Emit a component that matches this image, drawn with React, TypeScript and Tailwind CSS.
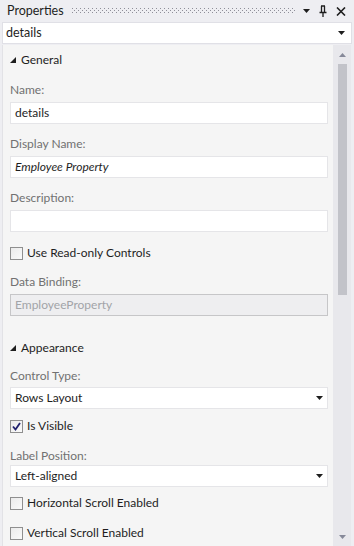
import React from "react";

function DownTri({ color = "#1e1e1e" }: { color?: string }) {
  return (
    <svg width="7" height="4" viewBox="0 0 7 4">
      <polygon points="0,0 7,0 3.5,4" fill={color} />
    </svg>
  );
}

function Header({ title }: { title: string }) {
  return (
    <div className="flex items-center h-[16px]">
      <svg width="6" height="6" viewBox="0 0 6 6">
        <polygon points="6,0 6,6 0,6" fill="#1e1e1e" />
      </svg>
      <span className="ml-[5px] text-[#1e1e1e]">{title}</span>
    </div>
  );
}

function Label({ text }: { text: string }) {
  return <div className="h-[16px] leading-[16px] text-[#717171]">{text}</div>;
}

function TextBox({ value, italic }: { value?: string; italic?: boolean }) {
  return (
    <div
      className={
        "h-[22px] bg-white border border-[#e5e5e8] flex items-center pl-[4px] text-[#1e1e1e] " +
        (italic ? "italic" : "")
      }
    >
      {value}
    </div>
  );
}

function Select({ value }: { value: string }) {
  return (
    <div className="h-[22px] bg-white border border-[#e5e5e8] flex items-center pl-[4px] pr-[4px] text-[#1e1e1e]">
      <span className="flex-1">{value}</span>
      <DownTri />
    </div>
  );
}

function Check({ label, checked }: { label: string; checked?: boolean }) {
  return (
    <div className="flex items-center h-[16px]">
      <div className="w-[13px] h-[13px] border border-[#8f8f8f] bg-gradient-to-br from-[#ebebeb] to-[#fafafa] flex items-center justify-center">
        {checked && (
          <svg width="9" height="9" viewBox="0 0 9 9">
            <path d="M1 4.5 L3.5 7.5 L8 1" stroke="#21216e" strokeWidth="1.8" fill="none" />
          </svg>
        )}
      </div>
      <span className="ml-[4px] text-[#1e1e1e]">{label}</span>
    </div>
  );
}

export default function App() {
  return (
    <div className="w-[354px] h-[546px] bg-[#eeeef2] flex flex-col overflow-hidden font-['Lato','Noto_Sans',sans-serif] text-[12px]">
      {/* title bar */}
      <div className="h-[22px] flex items-center shrink-0">
        <span className="ml-[7px] text-[#1e1e1e] text-[12.5px]">Properties</span>
        <svg className="ml-[8px] flex-1 h-[6px]" height="6">
          <defs>
            <pattern id="grip" width="4" height="4" patternUnits="userSpaceOnUse">
              <rect x="0" y="0" width="1" height="1" fill="#8f8f99" />
              <rect x="2" y="2" width="1" height="1" fill="#8f8f99" />
            </pattern>
          </defs>
          <rect width="100%" height="6" fill="url(#grip)" />
        </svg>
        <div className="ml-[8px] flex items-center gap-[9px] mr-[8px]">
          <DownTri />
          <svg width="8" height="12" viewBox="0 0 8 12">
            <path d="M2 1 H6 M2.5 1 V7 M5.5 1 V7 M0.5 7.5 H7.5 M4 7.5 V12" stroke="#1e1e1e" strokeWidth="1.3" fill="none" />
          </svg>
          <svg width="10" height="9" viewBox="0 0 10 9">
            <path d="M1 0.5 L9 8.5 M9 0.5 L1 8.5" stroke="#1e1e1e" strokeWidth="1.6" fill="none" />
          </svg>
        </div>
      </div>
      {/* object selector */}
      <div className="mx-[2px] h-[22px] shrink-0 bg-white border border-[#e0e0e6] flex items-center pl-[3px] pr-[6px] text-[#1e1e1e] text-[12.5px]">
        <span className="flex-1">details</span>
        <DownTri />
      </div>
      {/* content */}
      <div className="flex-1 flex ml-[2px] mr-[3px] mt-[1px] bg-[#f5f5f5] border-l border-[#e2e2e6]">
        <div className="flex-1 pl-[7px] pr-[5px] pt-[7px] flex flex-col">
          <Header title="General" />
          <div className="mt-[14px]"><Label text="Name:" /></div>
          <div className="mt-[4px]"><TextBox value="details" /></div>
          <div className="mt-[12px]"><Label text="Display Name:" /></div>
          <div className="mt-[4px]"><TextBox value="Employee Property" italic /></div>
          <div className="mt-[12px]"><Label text="Description:" /></div>
          <div className="mt-[4px]"><TextBox /></div>
          <div className="mt-[13px]"><Check label="Use Read-only Controls" /></div>
          <div className="mt-[13px]"><Label text="Data Binding:" /></div>
          <div className="mt-[4px] h-[22px] bg-[#eeeef0] border border-[#c6c6c8] flex items-center pl-[4px] text-[#a2a4a8]">
            EmployeeProperty
          </div>
          <div className="mt-[24px]"><Header title="Appearance" /></div>
          <div className="mt-[12px]"><Label text="Control Type:" /></div>
          <div className="mt-[3px]"><Select value="Rows Layout" /></div>
          <div className="mt-[9px]"><Check label="Is Visible" checked /></div>
          <div className="mt-[14px]"><Label text="Label Position:" /></div>
          <div className="mt-[1px]"><Select value="Left-aligned" /></div>
          <div className="mt-[8px]"><Check label="Horizontal Scroll Enabled" /></div>
          <div className="mt-[14px]"><Check label="Vertical Scroll Enabled" /></div>
        </div>
        {/* scrollbar */}
        <div className="w-[18px] bg-[#e8e8ec] flex flex-col items-center pt-[8px] pb-[7px]">
          <svg width="7" height="4" viewBox="0 0 7 4">
            <polygon points="0,4 7,4 3.5,0" fill="#868999" />
          </svg>
          <div className="mt-[7px] w-[9px] h-[231px] bg-[#c2c3c9]" />
          <div className="flex-1" />
          <DownTri color="#868999" />
        </div>
      </div>
    </div>
  );
}
